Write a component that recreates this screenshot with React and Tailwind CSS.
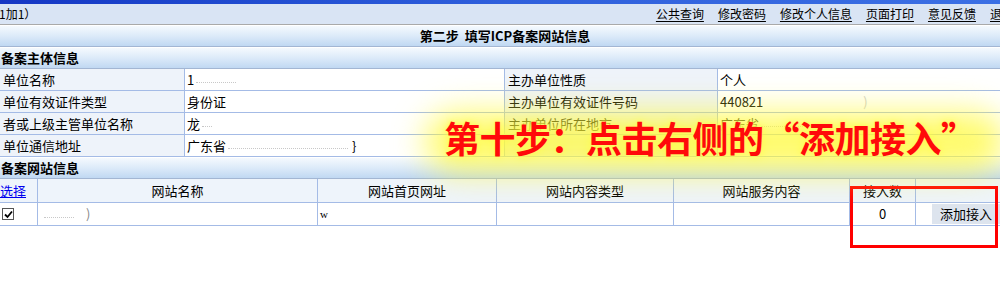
import React from 'react';

const font = { fontFamily: '"Noto Sans CJK SC", "Liberation Sans", sans-serif' };

const navLinks = ['公共查询', '修改密码', '修改个人信息', '页面打印', '意见反馈', '退出'];

const mainRows = [
  ['单位名称', '1', '主办单位性质', '个人'],
  ['单位有效证件类型', '身份证', '主办单位有效证件号码', '440821'],
  ['者或上级主管单位名称', '龙', '主办单位所在地市', '广东省'],
  ['单位通信地址', '广东省', '', ''],
];

const siteCols = ['选择', '网站名称', '网站首页网址', '网站内容类型', '网站服务内容', '接入数', ''];

function BarHeader({ children, center }) {
  return (
    <div className={`h-[21px] flex items-center border-b border-[#a3b6d3] bg-gradient-to-b from-[#f5f9fe] via-[#dceaf9] to-[#c0d8f2] text-[13px] font-bold text-black ${center ? 'justify-center pl-[10px]' : 'pl-[1px]'}`}>
      {children}
    </div>
  );
}

function Blur({ w }) {
  return <span className="inline-block h-px border-b border-dotted border-[#c8c8c8] ml-[2px] mt-[6px]" style={{ width: w }}></span>;
}

export default function App() {
  return (
    <div className="relative w-[1000px] h-[297px] overflow-hidden bg-white text-black" style={font}>
      <div className="h-[4px] bg-gradient-to-r from-[#1536c4] via-[#2f5fdc] to-[#3b6fe4]"></div>

      <div className="h-[21px] flex items-center bg-[#d9e4f4] text-[12px] border-b border-[#a9a9a9]">
        <span className="ml-[-1px]">1加1）</span>
        <div className="ml-auto mr-[-14px] flex gap-[14px]">
          {navLinks.map(l => (
            <a key={l} className="underline underline-offset-2 whitespace-nowrap">{l}</a>
          ))}
        </div>
      </div>

      <div className="h-px bg-white"></div>
      <BarHeader center>第二步&nbsp;&nbsp;填写ICP备案网站信息</BarHeader>
      <div className="h-px bg-white"></div>
      <BarHeader>备案主体信息</BarHeader>

      <div className="grid grid-cols-[185px_320px_213px_1fr] text-[13px]">
        {mainRows.map((r, i) => (
          <React.Fragment key={i}>
            <div className="h-[22px] flex items-center pl-[3px] bg-[#eef3fa] border-r border-b border-[#a4bbe6] whitespace-nowrap overflow-hidden">{r[0]}</div>
            <div className="h-[22px] flex items-center pl-[2px] border-r border-b border-[#a4bbe6] whitespace-nowrap">
              {r[1]}
              {i === 0 && <Blur w={40} />}
              {i === 2 && <Blur w={10} />}
              {i === 3 && <><Blur w={120} /><span className="ml-[4px]">}</span></>}
            </div>
            <div className="h-[22px] flex items-center pl-[3px] bg-[#eef3fa] border-r border-b border-[#a4bbe6] whitespace-nowrap">{r[2]}</div>
            <div className="h-[22px] flex items-center pl-[2px] border-b border-[#a4bbe6] whitespace-nowrap">
              {r[3]}
              {i === 1 && <span className="ml-[100px] text-[#cccccc]">)</span>}
              {i === 2 && <Blur w={60} />}
            </div>
          </React.Fragment>
        ))}
      </div>

      <div className="h-px bg-white"></div>
      <BarHeader>备案网站信息</BarHeader>

      <div className="grid grid-cols-[38px_280px_179px_177px_176px_66px_1fr] text-[13px]">
        {siteCols.map((c, i) => (
          <div key={i} className={`h-[24px] flex items-center bg-[#eef4fb] border-b border-[#a4bbe6] ${i < 6 ? 'border-r' : ''} ${i === 0 ? 'pl-0 text-[#0000ee] underline' : 'justify-center'}`}>
            {c}
          </div>
        ))}
        <div className="h-[23px] flex items-center pl-[2px] border-r border-b border-[#a4bbe6]">
          <span className="w-[12px] h-[12px] border border-[#555] bg-white flex items-center justify-center">
            <svg width="9" height="9" viewBox="0 0 9 9"><path d="M1 4.5 L3.5 7 L8 1.5" stroke="#000" strokeWidth="1.8" fill="none" /></svg>
          </span>
        </div>
        <div className="h-[23px] flex items-center pl-[4px] border-r border-b border-[#a4bbe6]">
          <Blur w={30} /><span className="ml-[12px] text-[#888]">)</span>
        </div>
        <div className="h-[23px] flex items-center pl-[2px] border-r border-b border-[#a4bbe6] text-[11px]" style={{ fontFamily: '"Liberation Serif", serif' }}>w</div>
        <div className="h-[23px] border-r border-b border-[#a4bbe6]"></div>
        <div className="h-[23px] border-r border-b border-[#a4bbe6]"></div>
        <div className="h-[23px] flex items-center justify-center border-r border-b border-[#a4bbe6]">0</div>
        <div className="h-[23px] flex items-center justify-end border-b border-[#a4bbe6]">
          <button className="h-[20px] w-[68px] bg-[#dde4ee] text-[13px] flex items-center justify-center">添加接入</button>
        </div>
      </div>

      <div className="absolute left-[850px] top-[186px] w-[148px] h-[62px] border-[3px] border-[#ff0000]"></div>

      <div className="absolute left-[425px] top-[112px] w-[580px] h-[60px] rounded-full bg-[#fffa3a]/75 blur-lg"></div>
      <div className="absolute left-[444px] top-[114px] text-[36px] leading-[46px] font-bold text-[#ff0a0a] whitespace-nowrap tracking-[-0.5px] [text-shadow:0_0_3px_#fff36a,0_0_10px_#ffff40]">
        第十步：点击右侧的“添加接入”
      </div>
    </div>
  );
}
